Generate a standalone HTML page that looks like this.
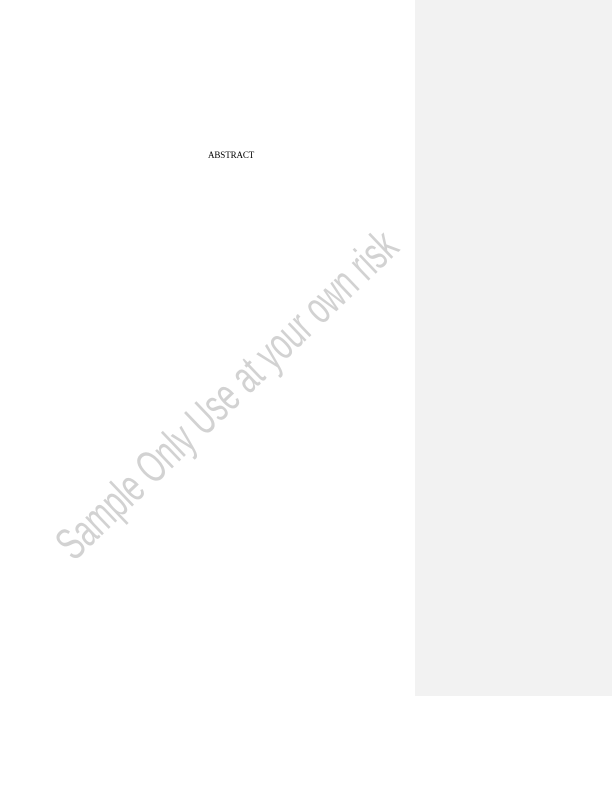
<!DOCTYPE html>
<html><head><style>
html,body{margin:0;padding:0;width:612px;height:792px;background:#fff;overflow:hidden;position:relative}
.panel{position:absolute;left:415px;top:0;width:197px;height:696px;background:#f2f2f2}
.t{position:absolute;left:208px;top:150px;font:9px "Liberation Serif",serif;color:#000;letter-spacing:-0.1px}
svg{position:absolute;left:0;top:0}
</style></head><body>
<div class="panel"></div>
<div class="t">ABSTRACT</div>
<svg width="612" height="792">
<text x="0" y="0" transform="translate(74,562) rotate(-43.7)" font-family="Liberation Sans Narrow, Liberation Sans, sans-serif" font-size="46" fill="#d2d2d2" textLength="452" lengthAdjust="spacingAndGlyphs">Sample Only Use at your own risk</text>
</svg>
</body></html>
